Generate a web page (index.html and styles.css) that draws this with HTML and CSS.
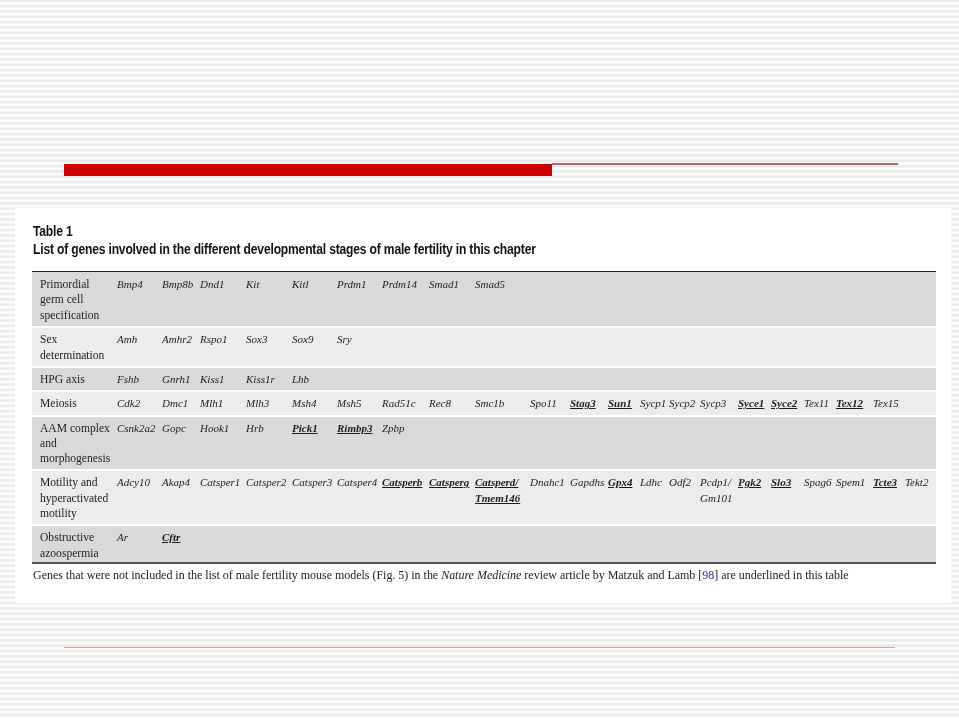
FILE: index.html
```html
<!DOCTYPE html>
<html lang="en">
<head>
<meta charset="utf-8">
<title>Table 1</title>
<link rel="stylesheet" href="styles.css">
</head>
<body>
<div class="slide">
  <div class="rule-top"><div class="rule-thick"></div><div class="rule-thin"></div></div>
  <div class="panel">
    <h1 class="title">Table 1<br>List of genes involved in the different developmental stages of male fertility in this chapter</h1>
    <table class="genes">
      <colgroup>
        <col class="c-label"><col class="c1"><col class="c2"><col class="c3"><col class="c4"><col class="c5"><col class="c6"><col class="c7"><col class="c8"><col class="c9"><col class="c10"><col class="c11"><col class="c12"><col class="c13"><col class="c14"><col class="c15"><col class="c16"><col class="c17"><col class="c18"><col class="c19"><col class="c20"><col class="c21">
      </colgroup>
      <tbody>
        <tr class="dark first"><th>Primordial germ cell specification</th><td>Bmp4</td><td>Bmp8b</td><td>Dnd1</td><td>Kit</td><td>Kitl</td><td>Prdm1</td><td>Prdm14</td><td>Smad1</td><td>Smad5</td><td colspan="12"></td></tr>
        <tr class="light"><th>Sex determination</th><td>Amh</td><td>Amhr2</td><td>Rspo1</td><td>Sox3</td><td>Sox9</td><td>Sry</td><td colspan="15"></td></tr>
        <tr class="dark"><th>HPG axis</th><td>Fshb</td><td>Gnrh1</td><td>Kiss1</td><td>Kiss1r</td><td>Lhb</td><td colspan="16"></td></tr>
        <tr class="light"><th>Meiosis</th><td>Cdk2</td><td>Dmc1</td><td>Mlh1</td><td>Mlh3</td><td>Msh4</td><td>Msh5</td><td>Rad51c</td><td>Rec8</td><td>Smc1b</td><td>Spo11</td><td><u>Stag3</u></td><td><u>Sun1</u></td><td>Sycp1</td><td>Sycp2</td><td>Sycp3</td><td><u>Syce1</u></td><td><u>Syce2</u></td><td>Tex11</td><td><u>Tex12</u></td><td>Tex15</td><td></td></tr>
        <tr class="dark"><th>AAM complex and morphogenesis</th><td>Csnk2a2</td><td>Gopc</td><td>Hook1</td><td>Hrb</td><td><u>Pick1</u></td><td><u>Rimbp3</u></td><td>Zpbp</td><td colspan="14"></td></tr>
        <tr class="light"><th>Motility and hyperactivated motility</th><td>Adcy10</td><td>Akap4</td><td>Catsper1</td><td>Catsper2</td><td>Catsper3</td><td>Catsper4</td><td><u>Catsperb</u></td><td><u>Catsperg</u></td><td><u>Catsperd/</u><br><u>Tmem146</u></td><td>Dnahc1</td><td>Gapdhs</td><td><u>Gpx4</u></td><td>Ldhc</td><td>Odf2</td><td>Pcdp1/<br>Gm101</td><td><u>Pgk2</u></td><td><u>Slo3</u></td><td>Spag6</td><td>Spem1</td><td><u>Tcte3</u></td><td>Tekt2</td></tr>
        <tr class="dark last"><th>Obstructive azoospermia</th><td>Ar</td><td><u>Cftr</u></td><td colspan="19"></td></tr>
      </tbody>
    </table>
    <p class="note">Genes that were not included in the list of male fertility mouse models (Fig. 5) in the <i>Nature Medicine</i> review article by Matzuk and Lamb [<span class="ref">98</span>] are underlined in this table</p>
  </div>
  <div class="rule-bottom"></div>
</div>
</body>
</html>
```

FILE: styles.css
```css
html, body {
  margin: 0;
  padding: 0;
}

body {
  background: #fff;
}

.slide {
  width: 959px;
  height: 718px;
  overflow: hidden;
  padding-top: 163px;
  box-sizing: border-box;
  background-color: #fff;
  background-image: repeating-linear-gradient(to bottom, #ebebeb 0, #ebebeb 1.6px, #fcfcfc 2.6px, #fcfcfc 4.4px, #ebebeb 5.33px);
}

.rule-top {
  display: flex;
  align-items: flex-start;
  margin: 0 61px 0 64px;
  height: 13px;
}

.rule-thick {
  width: 488px;
  height: 12px;
  margin-top: 1px;
  background: #cc0000;
}

.rule-thin {
  flex: 1;
  height: 2px;
  background: #b06a72;
}

.panel {
  margin: 32px 8px 0 15px;
  height: 395px;
  padding: 14px 14px 0 17px;
  box-sizing: border-box;
  background: #fff;
  filter: blur(0.35px);
}

.title {
  margin: 0 0 13px 1px;
  width: 640px;
  font: bold 14px/18px "Liberation Sans", Arial, sans-serif;
  letter-spacing: -0.2px;
  color: #111;
  transform: scaleX(0.863);
  transform-origin: left top;
}

.genes {
  width: 904px;
  table-layout: fixed;
  border-collapse: collapse;
  border-top: 1.5px solid #222;
  border-bottom: 2px solid #555;
  font: 11.6px/15.3px "Liberation Serif", "Times New Roman", serif;
  color: #1c1c1c;
}

.genes th, .genes td {
  padding: 4px 0 3px;
  vertical-align: top;
  text-align: left;
  white-space: nowrap;
  border-bottom: 2px solid #fff;
}

.genes th {
  padding-left: 8px;
  padding-right: 4px;
  font-weight: normal;
  white-space: normal;
}

.genes td {
  font-size: 11px;
  font-style: italic;
}

.genes u {
  font-weight: bold;
}

.genes .first th, .genes .first td {
  padding-top: 5px;
  padding-bottom: 3.5px;
}

.genes .last th, .genes .last td {
  padding-bottom: 1.5px;
  border-bottom: 0;
}

.dark { background: #d8dada; }
.light { background: #ebecec; }

.c-label { width: 85px; }
.c1 { width: 45px; }
.c2 { width: 38px; }
.c3 { width: 46px; }
.c4 { width: 46px; }
.c5 { width: 45px; }
.c6 { width: 45px; }
.c7 { width: 47px; }
.c8 { width: 46px; }
.c9 { width: 55px; }
.c10 { width: 40px; }
.c11 { width: 38px; }
.c12 { width: 32px; }
.c13 { width: 29px; }
.c14 { width: 31px; }
.c15 { width: 38px; }
.c16 { width: 33px; }
.c17 { width: 33px; }
.c18 { width: 32px; }
.c19 { width: 37px; }
.c20 { width: 32px; }
.c21 { width: 31px; }

.note {
  margin: 4px 0 0 1px;
  font: 12px/15px "Liberation Serif", "Times New Roman", serif;
  color: #222;
  letter-spacing: -0.02px;
}

.ref { color: #2a2a9a; }

.rule-bottom {
  margin: 44px 64px 0;
  height: 1px;
  background: #d9a0a0;
}
```
